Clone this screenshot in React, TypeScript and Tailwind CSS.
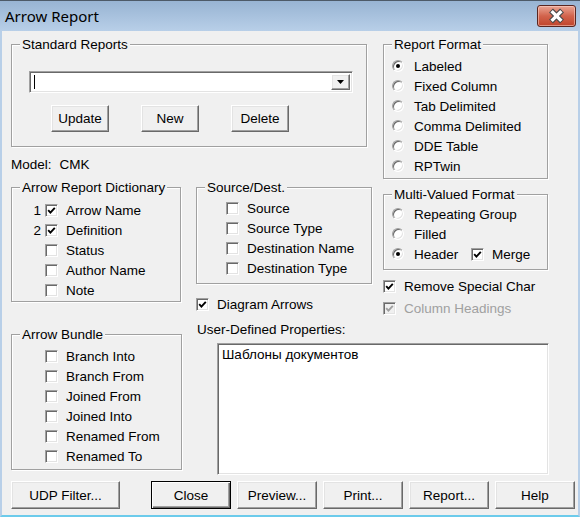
import React from "react";

const sunken =
  "border border-t-[#a0a0a0] border-l-[#a0a0a0] border-r-white border-b-white shadow-[inset_1px_1px_0_#696969,inset_-1px_-1px_0_#e3e3e3]";
const raised =
  "border border-t-white border-l-white border-r-[#696969] border-b-[#696969] shadow-[inset_-1px_-1px_0_#a0a0a0,inset_1px_1px_0_#e3e3e3] bg-[#f0f0f0]";

function Check({ checked, disabled }: { checked?: boolean; disabled?: boolean }) {
  return (
    <span
      className={`flex h-[13px] w-[13px] shrink-0 items-center justify-center ${sunken} ${
        disabled ? "bg-[#f0f0f0]" : "bg-white"
      }`}
    >
      {checked && (
        <svg width="9" height="9" viewBox="0 0 9 9">
          <polyline
            points="1.2,4.2 3.4,6.6 7.8,1.8"
            fill="none"
            stroke={disabled ? "#a0a0a0" : "#000"}
            strokeWidth="1.9"
          />
        </svg>
      )}
    </span>
  );
}

function Radio({ checked }: { checked?: boolean }) {
  return (
    <span className="flex h-[12px] w-[12px] shrink-0 items-center justify-center rounded-full border border-t-[#a0a0a0] border-l-[#a0a0a0] border-r-white border-b-white bg-white shadow-[inset_1px_1px_0_#696969,inset_-1px_-1px_0_#e3e3e3]">
      {checked && <span className="h-[4px] w-[4px] rounded-full bg-black" />}
    </span>
  );
}

function Group({
  title,
  className,
  children,
}: {
  title: string;
  className: string;
  children: React.ReactNode;
}) {
  return (
    <div
      className={`flex flex-col border border-[#a0a0a0] shadow-[inset_1px_1px_0_#fff,1px_1px_0_#fff] ${className}`}
    >
      <div className="-mt-[8px] ml-[8px] w-fit bg-[#f0f0f0] px-[2px] leading-[15px]">
        {title}
      </div>
      {children}
    </div>
  );
}

function CheckRow({
  label,
  checked,
  disabled,
  indent,
  num,
}: {
  label: string;
  checked?: boolean;
  disabled?: boolean;
  indent?: string;
  num?: string;
}) {
  return (
    <div className={`flex h-[20px] items-center ${indent ?? ""}`}>
      {num !== undefined && (
        <span className="w-[30px] pr-[1px] text-right leading-[15px]">{num}</span>
      )}
      <span className={num !== undefined ? "ml-[3px]" : ""}>
        <Check checked={checked} disabled={disabled} />
      </span>
      <span
        className={`ml-[8px] leading-[15px] ${disabled ? "text-[#a0a0a0]" : ""}`}
      >
        {label}
      </span>
    </div>
  );
}

function RadioRow({ label, checked }: { label: string; checked?: boolean }) {
  return (
    <div className="flex h-[20px] items-center pl-[8px]">
      <Radio checked={checked} />
      <span className="ml-[10px] leading-[15px]">{label}</span>
    </div>
  );
}

function Btn({
  label,
  className,
  isDefault,
}: {
  label: string;
  className: string;
  isDefault?: boolean;
}) {
  return (
    <div
      className={`flex items-center justify-center leading-[15px] ${
        isDefault
          ? "border border-black bg-[#f0f0f0] shadow-[inset_1px_1px_0_#fff,inset_-1px_-1px_0_#696969,inset_-2px_-2px_0_#a0a0a0]"
          : raised
      } ${className}`}
    >
      {label}
    </div>
  );
}

export default function App() {
  return (
    <div className="flex h-[517px] w-[580px] flex-col overflow-hidden font-['Liberation_Sans',Arial,sans-serif] text-[13.5px] text-black">
      {/* title bar */}
      <div className="flex h-[31px] shrink-0 items-start justify-between border-t border-[#4d5a68] bg-gradient-to-b from-[#98b4d3] to-[#b8cfe8]">
        <span className="ml-[5px] mt-[5px] font-['Noto_Sans','Open_Sans',sans-serif] text-[15px] leading-[20px] text-black">
          Arrow Report
        </span>
        <div className="mr-[4px] mt-[4px] h-[22px] w-[39px] overflow-hidden rounded-[3px] border border-[#5a2620] bg-gradient-to-b from-[#e9a493] via-[#d2634c] to-[#c0442b] shadow-[inset_0_0_0_1px_rgba(255,220,210,0.5)]">
          <svg width="37" height="20" viewBox="0 0 37 20">
            <path
              d="M13 4.5 L24 15.5 M24 4.5 L13 15.5"
              stroke="#4a4a4a"
              strokeWidth="5.6"
              fill="none"
            />
            <path
              d="M13.6 5.1 L23.4 14.9 M23.4 5.1 L13.6 14.9"
              stroke="#fff"
              strokeWidth="3.4"
              fill="none"
            />
          </svg>
        </div>
      </div>

      {/* body */}
      <div className="flex flex-1 flex-col border-x-2 border-b-2 border-x-[#b8cfe8] border-b-[#6ccbeb] bg-[#f0f0f0] pl-[9px]">
        {/* top section */}
        <div className="flex h-[287px] shrink-0 pt-[13px]">
          <div className="flex w-[361px] flex-col">
            <Group title="Standard Reports" className="h-[103px] w-[356px]">
              <div
                className={`ml-[17px] mt-[19px] flex h-[22px] w-[324px] items-stretch bg-white p-[2px] ${sunken}`}
              >
                <div className="flex flex-1 items-center pl-[2px]">
                  <span className="h-[14px] w-px bg-black" />
                </div>
                <div className={`flex w-[19px] items-center justify-center ${raised}`}>
                  <svg width="8" height="5" viewBox="0 0 8 5">
                    <path d="M0 0 H7 L3.5 4 Z" fill="#000" />
                  </svg>
                </div>
              </div>
              <div className="ml-[39px] mt-[12px] flex gap-[32px]">
                <Btn label="Update" className="h-[27px] w-[58px]" />
                <Btn label="New" className="h-[27px] w-[58px]" />
                <Btn label="Delete" className="h-[27px] w-[58px]" />
              </div>
            </Group>

            <div className="mt-[10px] leading-[15px]">
              Model:<span className="ml-[8px]">CMK</span>
            </div>

            <div className="mt-[15px] flex items-start">
              <Group title="Arrow Report Dictionary" className="h-[115px] w-[171px]">
                <div className="mt-[5px] flex flex-col">
                  <CheckRow num="1" label="Arrow Name" checked />
                  <CheckRow num="2" label="Definition" checked />
                  <CheckRow num="" label="Status" />
                  <CheckRow num="" label="Author Name" />
                  <CheckRow num="" label="Note" />
                </div>
              </Group>

              <div className="ml-[15px] flex flex-col">
                <Group title="Source/Dest." className="h-[97px] w-[176px]">
                  <div className="mt-[3px] flex flex-col">
                    <CheckRow indent="pl-[29px]" label="Source" />
                    <CheckRow indent="pl-[29px]" label="Source Type" />
                    <CheckRow indent="pl-[29px]" label="Destination Name" />
                    <CheckRow indent="pl-[29px]" label="Destination Type" />
                  </div>
                </Group>
                <div className="mt-[10px]">
                  <CheckRow label="Diagram Arrows" checked />
                </div>
              </div>
            </div>
          </div>

          <div className="ml-[11px] flex w-[165px] flex-col">
            <Group title="Report Format" className="h-[135px] w-[165px]">
              <div className="mt-[4px] flex flex-col">
                <RadioRow label="Labeled" checked />
                <RadioRow label="Fixed Column" />
                <RadioRow label="Tab Delimited" />
                <RadioRow label="Comma Delimited" />
                <RadioRow label="DDE Table" />
                <RadioRow label="RPTwin" />
              </div>
            </Group>

            <Group title="Multi-Valued Format" className="mt-[15px] h-[76px] w-[165px]">
              <div className="mt-[2px] flex flex-col">
                <RadioRow label="Repeating Group" />
                <RadioRow label="Filled" />
                <div className="flex h-[20px] items-center pl-[8px]">
                  <Radio checked />
                  <span className="ml-[10px] w-[57px] leading-[15px]">Header</span>
                  <Check checked />
                  <span className="ml-[8px] leading-[15px]">Merge</span>
                </div>
              </div>
            </Group>

            <div className="mt-[6px]">
              <CheckRow label="Remove Special Char" checked />
            </div>
            <div className="mt-[2px]">
              <CheckRow label="Column Headings" checked disabled />
            </div>
          </div>
        </div>

        {/* middle section */}
        <div className="flex h-[163px] shrink-0 items-start">
          <Group title="Arrow Bundle" className="mt-[16px] h-[136px] w-[171px]">
            <div className="mt-[4px] flex flex-col">
              <CheckRow indent="pl-[33px]" label="Branch Into" />
              <CheckRow indent="pl-[33px]" label="Branch From" />
              <CheckRow indent="pl-[33px]" label="Joined From" />
              <CheckRow indent="pl-[33px]" label="Joined Into" />
              <CheckRow indent="pl-[33px]" label="Renamed From" />
              <CheckRow indent="pl-[33px]" label="Renamed To" />
            </div>
          </Group>

          <div className="ml-[15px] flex flex-col">
            <div className="mt-[4px] leading-[15px]">User-Defined Properties:</div>
            <div
              className={`ml-[20px] mt-[6px] h-[132px] w-[332px] bg-white pl-[4px] pt-[3px] leading-[15px] ${sunken}`}
            >
              Шаблоны документов
            </div>
          </div>
        </div>

        {/* buttons */}
        <div className="flex h-[28px] shrink-0">
          <Btn label="UDP Filter..." className="h-[28px] w-[109px]" />
          <div className="ml-[31px] flex gap-[6px]">
            <Btn label="Close" className="h-[28px] w-[80px]" isDefault />
            <Btn label="Preview..." className="h-[28px] w-[80px]" />
            <Btn label="Print..." className="h-[28px] w-[80px]" />
            <Btn label="Report..." className="h-[28px] w-[80px]" />
            <Btn label="Help" className="h-[28px] w-[80px]" />
          </div>
        </div>
      </div>
    </div>
  );
}
